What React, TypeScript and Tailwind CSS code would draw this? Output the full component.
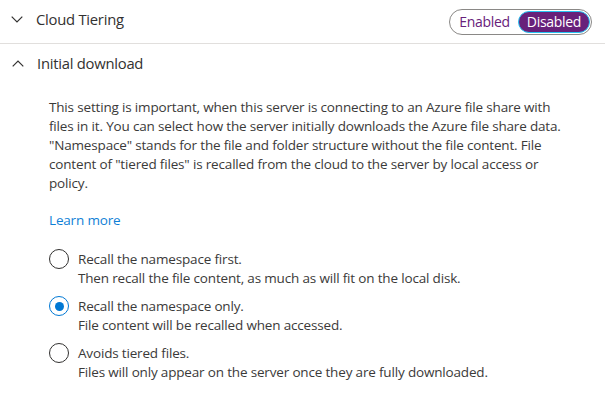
import { useState } from 'react'

const font = { fontFamily: '"Open Sans", "Noto Sans", sans-serif' }

const options = [
  {
    id: 'first',
    title: 'Recall the namespace first.',
    hint: 'Then recall the file content, as much as will fit on the local disk.',
  },
  {
    id: 'only',
    title: 'Recall the namespace only.',
    hint: 'File content will be recalled when accessed.',
  },
  {
    id: 'avoid',
    title: 'Avoids tiered files.',
    hint: 'Files will only appear on the server once they are fully downloaded.',
  },
]

const description = [
  'This setting is important, when this server is connecting to an Azure file share with',
  'files in it. You can select how the server initially downloads the Azure file share data.',
  '"Namespace" stands for the file and folder structure without the file content. File',
  'content of "tiered files" is recalled from the cloud to the server by local access or',
  'policy.',
]

function Chevron({ up }: { up?: boolean }) {
  return (
    <svg width="12" height="7" viewBox="0 0 12 7" className="shrink-0">
      <path
        d={up ? 'M0.7 6.3 L6 1 L11.3 6.3' : 'M0.7 0.7 L6 6 L11.3 0.7'}
        fill="none"
        stroke="#323130"
        strokeWidth="1.2"
      />
    </svg>
  )
}

export default function App() {
  const [tiering, setTiering] = useState<'on' | 'off'>('off')
  const [choice, setChoice] = useState('only')

  return (
    <div className="h-[403px] w-[605px] overflow-hidden bg-white text-[#323130]" style={font}>
      {/* Cloud Tiering */}
      <div className="flex h-[44px] items-center border-b border-[#e1dfdd] pr-[13px]">
        <div className="flex items-center gap-[13px] pb-[4px] pl-[11px]">
          <Chevron />
          <span className="text-[14.8px] tracking-[-0.25px]">Cloud Tiering</span>
        </div>
        <div className="ml-auto flex h-[26px] w-[143px] items-center rounded-full border-[1.5px] border-[#8a8886] p-[1px]">
          <button
            type="button"
            onClick={() => setTiering('on')}
            className={`flex h-full flex-1 items-center justify-center rounded-full text-[14px] tracking-[-0.3px] ${
              tiering === 'on' ? 'border-[1.5px] border-[#28c4f2] bg-[#68217a] text-white' : 'text-[#68217a]'
            }`}
          >
            Enabled
          </button>
          <button
            type="button"
            onClick={() => setTiering('off')}
            className={`flex h-full w-[72px] items-center justify-center rounded-full text-[14px] tracking-[-0.3px] ${
              tiering === 'off' ? 'border-[1.5px] border-[#28c4f2] bg-[#68217a] text-white' : 'text-[#68217a]'
            }`}
          >
            Disabled
          </button>
        </div>
      </div>

      {/* Initial download */}
      <div className="flex h-[38px] items-center gap-[13px] pl-[12px]">
        <Chevron up />
        <span className="text-[14.8px] tracking-[-0.25px]">Initial download</span>
      </div>

      <div className="pl-[49px] pt-[16px] text-[13.5px] leading-[19px] tracking-[-0.17px] text-[#3b3a39]">
        <p>
          {description.map((line) => (
            <span key={line} className="block whitespace-nowrap">
              {line}
            </span>
          ))}
        </p>

        <a href="#" className="mt-[18px] block w-fit text-[#0f7fd6]">
          Learn more
        </a>

        <div className="mt-[20px] flex flex-col gap-[9px]">
          {options.map((o) => {
            const on = choice === o.id
            return (
              <label key={o.id} className="flex cursor-pointer items-start gap-[9px]" onClick={() => setChoice(o.id)}>
                <span
                  className={`mt-[-1px] flex h-[20px] w-[20px] shrink-0 items-center justify-center rounded-full border-[1.5px] ${
                    on ? 'border-[#0078d4]' : 'border-[#323130]'
                  }`}
                >
                  {on && <span className="h-[9px] w-[9px] rounded-full bg-[#0078d4]" />}
                </span>
                <span className="flex flex-col">
                  <span>{o.title}</span>
                  <span>{o.hint}</span>
                </span>
              </label>
            )
          })}
        </div>
      </div>
    </div>
  )
}
